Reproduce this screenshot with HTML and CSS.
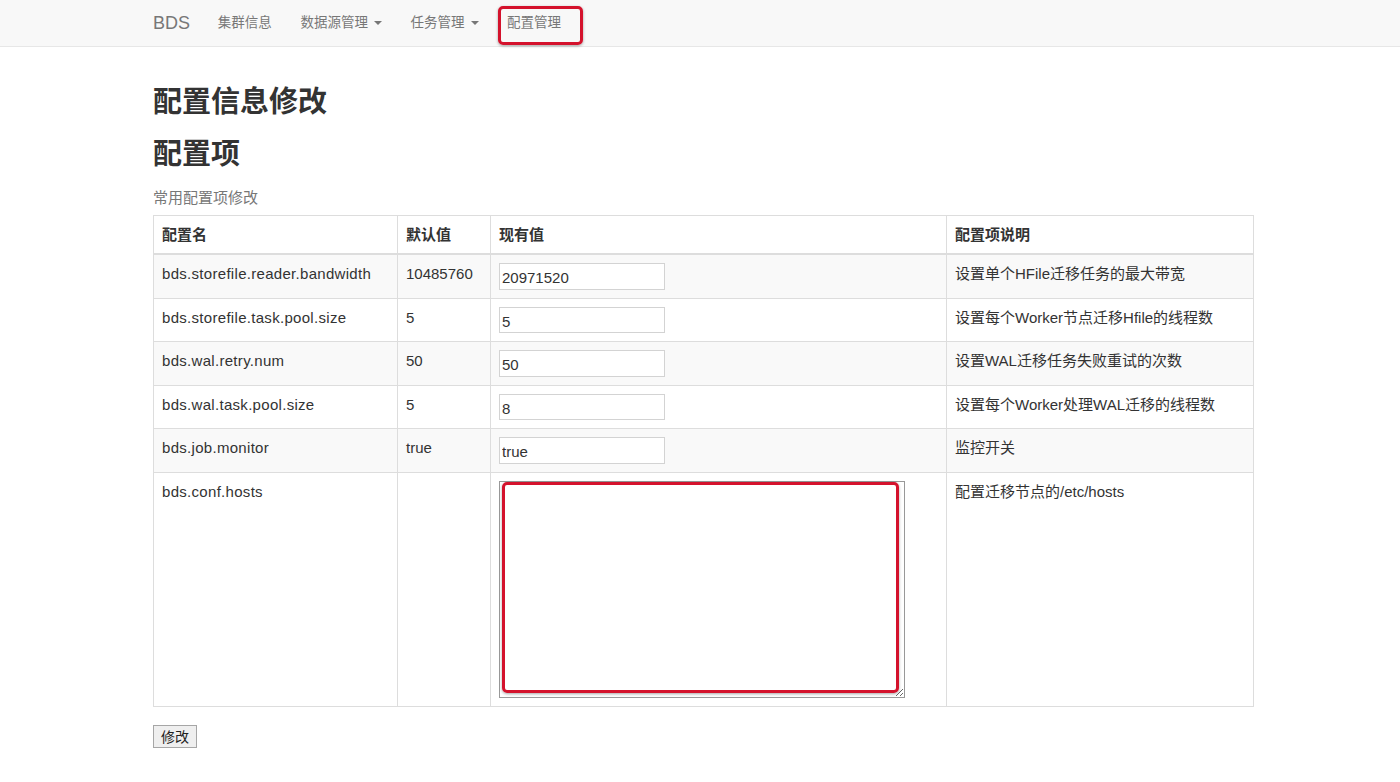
FILE: index.html
```html
<!DOCTYPE html>
<html lang="zh-CN">
<head>
<meta charset="utf-8">
<title>BDS 配置管理</title>
<link rel="stylesheet" href="styles.css">
</head>
<body>
<nav class="navbar">
  <div class="nav-inner">
    <a class="brand">BDS</a>
    <a class="nav-link">集群信息</a>
    <a class="nav-link">数据源管理<span class="caret"></span></a>
    <a class="nav-link">任务管理<span class="caret"></span></a>
    <a class="nav-link active">配置管理<span class="mark mark-nav"></span></a>
  </div>
</nav>
<main class="container">
  <h2 class="title first">配置信息修改</h2>
  <h2 class="title">配置项</h2>
  <p class="caption">常用配置项修改</p>
  <table class="conf-table">
    <colgroup>
      <col class="c1"><col class="c2"><col class="c3"><col class="c4">
    </colgroup>
    <thead>
      <tr><th>配置名</th><th>默认值</th><th>现有值</th><th>配置项说明</th></tr>
    </thead>
    <tbody>
      <tr><td class="key">bds.storefile.reader.bandwidth</td><td>10485760</td><td><input class="val" type="text" value="20971520"></td><td>设置单个HFile迁移任务的最大带宽</td></tr>
      <tr><td class="key">bds.storefile.task.pool.size</td><td>5</td><td><input class="val" type="text" value="5"></td><td>设置每个Worker节点迁移Hfile的线程数</td></tr>
      <tr><td class="key">bds.wal.retry.num</td><td>50</td><td><input class="val" type="text" value="50"></td><td>设置WAL迁移任务失败重试的次数</td></tr>
      <tr><td class="key">bds.wal.task.pool.size</td><td>5</td><td><input class="val" type="text" value="8"></td><td>设置每个Worker处理WAL迁移的线程数</td></tr>
      <tr><td class="key">bds.job.monitor</td><td>true</td><td><input class="val" type="text" value="true"></td><td>监控开关</td></tr>
      <tr><td class="key">bds.conf.hosts</td><td></td><td><div class="ta-wrap"><textarea class="hosts"></textarea><span class="mark mark-ta"></span></div></td><td>配置迁移节点的/etc/hosts</td></tr>
    </tbody>
  </table>
  <button class="submit" type="button">修改</button>
</main>
</body>
</html>
```
FILE: styles.css
```css
body {
  margin: 0;
  font-family: "Liberation Sans", Arial, "Noto Sans CJK SC", sans-serif;
  color: #333;
  background: #fff;
}
.navbar {
  height: 46px;
  background: #f8f8f8;
  border-bottom: 1px solid #e7e7e7;
}
.nav-inner {
  margin-left: 153px;
  display: flex;
  align-items: center;
  height: 46px;
}
.brand {
  font-size: 18px;
  color: #777;
  padding-right: 13.5px;
}
.nav-link {
  position: relative;
  font-size: 13.5px;
  color: #777;
  padding: 0 14.3px;
  line-height: 46px;
}
.caret {
  display: inline-block;
  width: 0;
  height: 0;
  margin-left: 6px;
  vertical-align: middle;
  border-top: 4px solid #777;
  border-left: 4px solid transparent;
  border-right: 4px solid transparent;
}
.mark {
  position: absolute;
  border: 3px solid #d4122c;
  border-radius: 5px;
  box-shadow: 0 1px 3px rgba(0, 0, 0, 0.35);
  box-sizing: border-box;
  pointer-events: none;
}
.mark-nav {
  left: 5px;
  top: 6px;
  width: 85px;
  height: 39px;
}
.container {
  margin-left: 153px;
  width: 1100px;
}
.title {
  font-size: 29px;
  font-weight: bold;
  line-height: 33px;
  margin: 19px 0 0;
  color: #333;
}
.title.first {
  margin-top: 39px;
}
.caption {
  font-size: 15px;
  line-height: 21px;
  color: #777;
  margin: 16px 0 7px;
}
.conf-table {
  width: 1100px;
  border-collapse: collapse;
  table-layout: fixed;
  font-size: 15px;
  line-height: 21px;
}
.c1 { width: 244px; }
.c2 { width: 93px; }
.c3 { width: 456px; }
.c4 { width: 307px; }
.conf-table th,
.conf-table td {
  border: 1px solid #ddd;
  padding: 8px;
  text-align: left;
  vertical-align: top;
}
.conf-table td.key {
  letter-spacing: 0.3px;
}
.conf-table th {
  font-weight: bold;
  padding: 8px;
  border-bottom: 2px solid #ddd;
}
.conf-table tbody tr:nth-child(odd) {
  background: #f9f9f9;
}
.val {
  box-sizing: border-box;
  width: 166px;
  height: 26.5px;
  margin: 0;
  border: 1px solid #d3d3d3;
  padding: 3px 2px 0;
  font-family: "Liberation Sans", Arial, sans-serif;
  font-size: 15px;
  color: #333;
  background: #fff;
  display: block;
}
.ta-wrap {
  position: relative;
  width: 406px;
  height: 217px;
}
.hosts {
  box-sizing: border-box;
  width: 406px;
  height: 217px;
  margin: 0;
  border: 1px solid #999;
  display: block;
  background: #fff;
}
.mark-ta {
  left: 3px;
  top: 1px;
  width: 397px;
  height: 211px;
}
.submit {
  display: block;
  margin-top: 18px;
  height: 23px;
  padding: 0 7px;
  font-size: 14px;
  font-family: "Liberation Sans", Arial, "Noto Sans CJK SC", sans-serif;
  color: #222;
  background: #efefef;
  border: 1px solid #a6a6a6;
  border-radius: 0;
}
```
